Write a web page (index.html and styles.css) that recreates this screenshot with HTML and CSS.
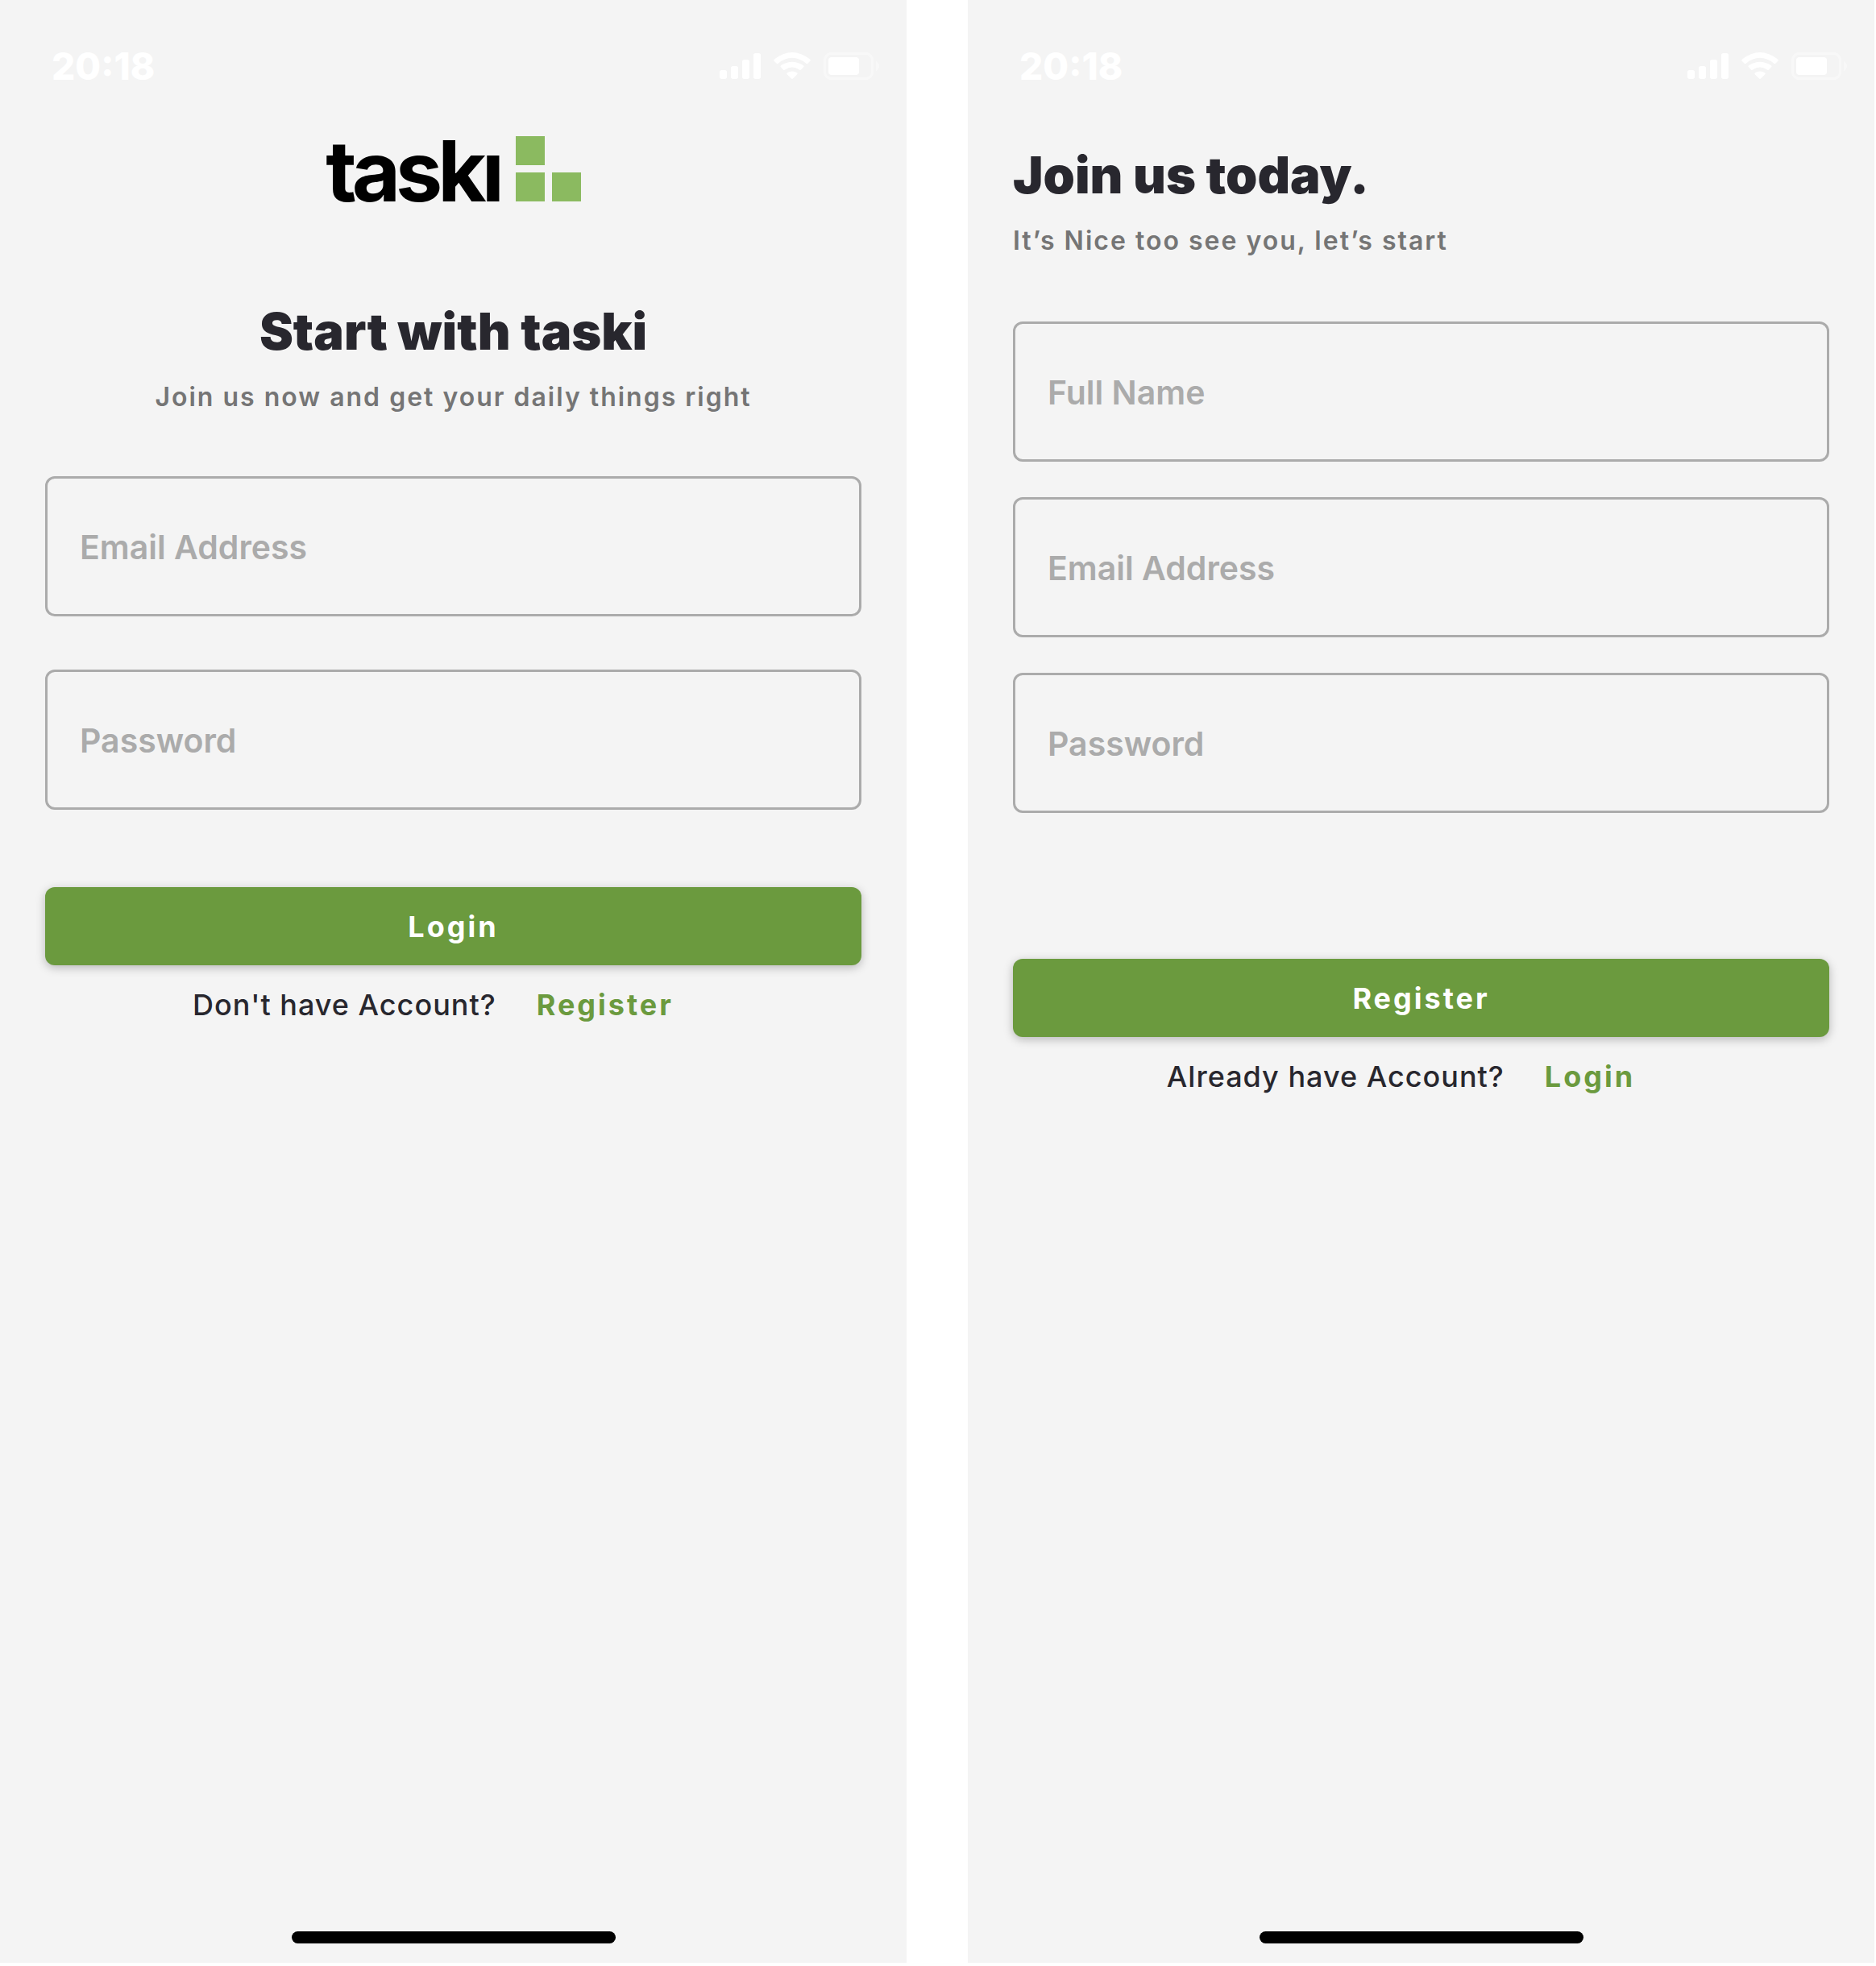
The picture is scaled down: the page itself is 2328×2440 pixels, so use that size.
FILE: index.html
```html
<!DOCTYPE html>
<html lang="en">
<head>
<meta charset="utf-8">
<meta name="viewport" content="width=device-width, initial-scale=1">
<title>taski</title>
<link rel="stylesheet" href="styles.css">
</head>
<body>
<svg class="sprite" width="0" height="0" aria-hidden="true">
  <symbol id="status-icons" viewBox="0 0 594 102">
    <g fill="#fff">
      <rect x="0" y="66" width="27" height="33" rx="8"/>
      <rect x="42" y="51" width="27" height="48" rx="8"/>
      <rect x="84" y="27" width="27" height="72" rx="8"/>
      <rect x="126" y="3" width="27" height="96" rx="8"/>
      <path d="M203 26Q270 -26 337 26Q340 29 337 32L328 41Q325 44 322 41Q270 0 218 41Q215 44 212 41L203 32Q200 29 203 26Z"/>
      <path d="M228 49Q270 22 312 49Q316 52 312 55L304 64Q301 67 298 65Q270 46 242 65Q239 67 236 64L228 55Q224 52 228 49Z"/>
      <path d="M252 76Q270 65 288 76Q292 79 289 82L272 98Q270 100 268 98L251 82Q248 79 252 76Z"/>
      <rect x="405" y="18" width="114" height="66" rx="12"/>
    </g>
    <g opacity=".45">
      <rect x="391" y="4" width="178" height="94" rx="26" fill="none" stroke="#fff" stroke-width="9"/>
      <path fill="#fff" d="M582 32Q594 40 594 51T582 70Z"/>
    </g>
  </symbol>
</svg>
<div class="screens">
  <main class="screen" id="login">
    <div class="status">
      <span class="time">20:18</span>
      <svg class="status-icons" role="img" aria-label="Signal, Wi-Fi, battery"><use href="#status-icons"/></svg>
    </div>
    <div class="content content-login">
      <div class="logo">
        <span class="logo-word">taskı</span>
        <svg class="logo-mark" viewBox="0 0 81 81" aria-hidden="true">
          <path fill="#8bba60" d="M0 0h36v36H0zM0 45h36v36H0zM45 45h36v36H45z"/>
        </svg>
      </div>
      <header class="intro intro-center">
        <h1>Start with taski</h1>
        <p>Join us now and get your daily things right</p>
      </header>
      <form class="form">
        <div class="fields fields-login">
          <input type="email" placeholder="Email Address" aria-label="Email Address">
          <input type="password" placeholder="Password" aria-label="Password">
        </div>
        <button class="submit" type="button">Login</button>
      </form>
      <p class="switch"><span>Don't have Account?</span><a href="#register">Register</a></p>
    </div>
    <div class="home-bar"></div>
  </main>
  <section class="screen" id="register">
    <div class="status">
      <span class="time">20:18</span>
      <svg class="status-icons" role="img" aria-label="Signal, Wi-Fi, battery"><use href="#status-icons"/></svg>
    </div>
    <div class="content content-register">
      <header class="intro">
        <h1>Join us today.</h1>
        <p>It’s Nice too see you, let’s start</p>
      </header>
      <form class="form form-register">
        <div class="fields">
          <input type="text" placeholder="Full Name" aria-label="Full Name">
          <input type="email" placeholder="Email Address" aria-label="Email Address">
          <input type="password" placeholder="Password" aria-label="Password">
        </div>
        <button class="submit" type="button">Register</button>
      </form>
      <p class="switch"><span>Already have Account?</span><a href="#login">Login</a></p>
    </div>
    <div class="home-bar"></div>
  </section>
</div>
</body>
</html>
```
FILE: styles.css
```css
* {
  box-sizing: border-box;
}

body {
  margin: 0;
  background: #fff;
  color: #28272e;
  font-family: Inter, "Liberation Sans", sans-serif;
}

h1,
p {
  margin: 0;
}

.sprite {
  position: absolute;
}

.screens {
  display: grid;
  grid-template-columns: 1fr 1fr;
  gap: 76px;
  min-height: 100vh;
  padding: 0 2px 4px 0;
}

.screen {
  display: flex;
  flex-direction: column;
  background: #f4f4f4;
}

.status {
  display: flex;
  align-items: center;
  justify-content: space-between;
  padding: 58px 34px 0 64px;
  color: #fff;
}

.time {
  font-size: 46px;
  font-weight: 800;
  line-height: 48px;
}

.status-icons {
  width: 198px;
  height: 34px;
}

.content {
  display: flex;
  flex: 1;
  flex-direction: column;
  padding: 0 56px;
}

.content-login {
  padding-top: 63px;
}

.content-register {
  padding-top: 73px;
}

.logo {
  display: flex;
  align-items: baseline;
  justify-content: center;
  gap: 20px;
  margin-bottom: 120px;
}

.logo-word {
  color: #000;
  font-size: 104px;
  font-weight: 700;
  letter-spacing: -6px;
  line-height: 81px;
}

.logo-mark {
  width: 81px;
  height: 81px;
}

.intro {
  display: flex;
  flex-direction: column;
  gap: 24px;
  margin-bottom: 80px;
}

.intro-center {
  margin-bottom: 78px;
  text-align: center;
}

.intro h1 {
  font-size: 63px;
  font-weight: 900;
  line-height: 76px;
}

.intro p {
  color: #757575;
  font-size: 32px;
  font-weight: 600;
  letter-spacing: 2px;
  line-height: 40px;
}

.form {
  display: flex;
  flex-direction: column;
  gap: 96px;
}

.form-register {
  gap: 181px;
}

.fields {
  display: flex;
  flex-direction: column;
  gap: 44px;
}

.fields-login {
  gap: 66px;
}

.fields input {
  width: 100%;
  height: 174px;
  padding: 2px 40px 0;
  border: 3px solid #ababab;
  border-radius: 12px;
  background: transparent;
  color: inherit;
  font: 600 41px/48px Inter, "Liberation Sans", sans-serif;
}

.fields input::placeholder {
  color: #ababab;
  opacity: 1;
}

.submit {
  height: 97px;
  border: 0;
  border-radius: 12px;
  background: #6b9a3e;
  box-shadow: 0 3px 12px rgba(0, 0, 0, .25);
  color: #fff;
  font: 700 36px/48px Inter, "Liberation Sans", sans-serif;
  letter-spacing: 3px;
}

.switch {
  display: flex;
  justify-content: center;
  margin-top: 25px;
  font-size: 36px;
  font-weight: 500;
  letter-spacing: 1px;
  line-height: 48px;
}

.switch a {
  padding: 0 50px;
  color: #6b9a3e;
  font-weight: 700;
  letter-spacing: 3px;
  text-decoration: none;
}

.home-bar {
  align-self: center;
  width: 402px;
  height: 15px;
  margin-bottom: 24px;
  border-radius: 8px;
  background: #000;
}
```
